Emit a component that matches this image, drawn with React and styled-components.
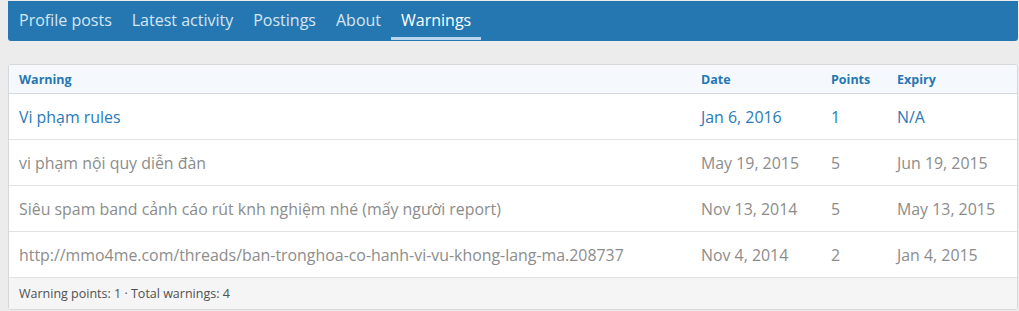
import React from "react";
import styled, { createGlobalStyle } from "styled-components";

const GlobalStyle = createGlobalStyle`
  html, body {
    margin: 0;
    padding: 0;
    background: #ececec;
  }
  body {
    font-family: "Open Sans", "Noto Sans", sans-serif;
  }
`;

const tabs = ["Profile posts", "Latest activity", "Postings", "About", "Warnings"];

const warnings = [
  { title: "Vi phạm rules", date: "Jan 6, 2016", points: 1, expiry: "N/A", active: true },
  { title: "vi phạm nội quy diễn đàn", date: "May 19, 2015", points: 5, expiry: "Jun 19, 2015" },
  { title: "Siêu spam band cảnh cáo rút knh nghiệm nhé (mấy người report)", date: "Nov 13, 2014", points: 5, expiry: "May 13, 2015" },
  { title: "http://mmo4me.com/threads/ban-tronghoa-co-hanh-vi-vu-khong-lang-ma.208737", date: "Nov 4, 2014", points: 2, expiry: "Jan 4, 2015" },
];

function App() {
  return (
    <Page>
      <GlobalStyle />
      <TabBar>
        {tabs.map((t) => (
          <Tab key={t} $active={t === "Warnings"}>{t}</Tab>
        ))}
      </TabBar>
      <Card>
        <HeadRow>
          <HeadCell>Warning</HeadCell>
          <HeadCell>Date</HeadCell>
          <HeadCell>Points</HeadCell>
          <HeadCell>Expiry</HeadCell>
        </HeadRow>
        {warnings.map((w) => (
          <Row key={w.title} $active={w.active}>
            <Cell>{w.title}</Cell>
            <Cell>{w.date}</Cell>
            <Cell>{w.points}</Cell>
            <Cell>{w.expiry}</Cell>
          </Row>
        ))}
        <Footer>Warning points: 1 · Total warnings: 4</Footer>
      </Card>
    </Page>
  );
}

export default App;

const Page = styled.div`
  padding: 1px 1px 0 8px;
  display: flex;
  flex-direction: column;
  gap: 23px;
`;

const TabBar = styled.nav`
  background: #2577b1;
  height: 40px;
  border-radius: 0 0 3px 3px;
  display: flex;
  align-items: stretch;
  padding-left: 1px;
`;

const Tab = styled.a`
  display: flex;
  align-items: center;
  padding: 2px 10px 0;
  font-size: 16px;
  color: ${(p) => (p.$active ? "#ffffff" : "#d6e6f4")};
  border-bottom: 3px solid ${(p) => (p.$active ? "#b8d7ee" : "transparent")};
  margin-bottom: 1px;
  cursor: pointer;
`;

const Card = styled.div`
  background: #fff;
  border: 1px solid #d8d8d8;
  border-radius: 3px;
  overflow: hidden;
`;

const grid = `
  display: grid;
  grid-template-columns: 1fr 130px 66px 130px;
  align-items: center;
`;

const HeadRow = styled.div`
  ${grid}
  height: 28px;
  background: #f5f9fe;
  border-bottom: 1px solid #d3d8de;
`;

const HeadCell = styled.div`
  padding: 0 10px;
  font-size: 12.5px;
  font-weight: 700;
  color: #2577b1;
`;

const Row = styled.div`
  ${grid}
  height: 45px;
  border-bottom: 1px solid #e2e2e2;
  color: ${(p) => (p.$active ? "#2a7ab9" : "#8c8c8c")};
`;

const Cell = styled.div`
  padding: 0 10px;
  font-size: 15.9px;
  white-space: nowrap;
`;

const Footer = styled.div`
  height: 31px;
  display: flex;
  align-items: center;
  padding: 0 10px;
  background: #f5f5f5;
  font-size: 12.5px;
  color: #505050;
`;
